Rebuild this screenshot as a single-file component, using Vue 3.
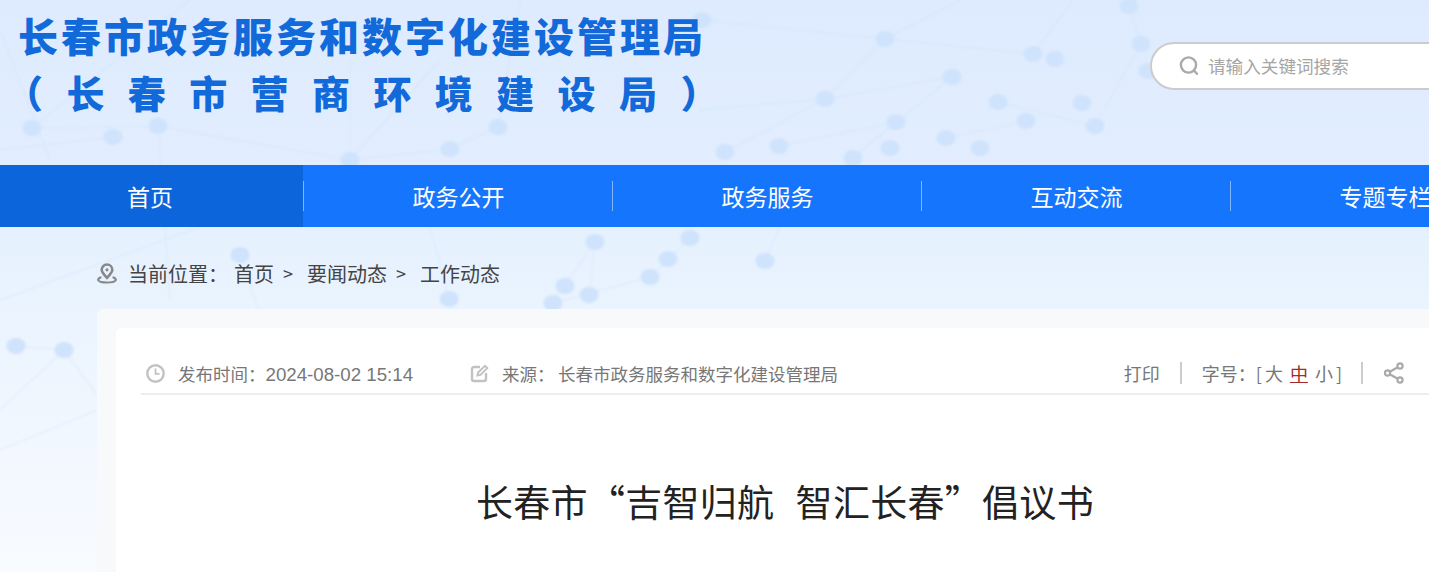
<script setup>
const nav = ['首页', '政务公开', '政务服务', '互动交流', '专题专栏']
const nodes = [
  [32,128],[113,137],[158,126],[350,160],[498,127],[450,149],[702,20],[885,39],[1033,54],[1055,59],
  [825,99],[952,77],[998,102],[896,122],[1026,121],[1095,126],[1082,103],[946,138],[890,148],[725,152],
  [779,146],[853,158],[980,148],[1129,6],[1141,44],[1148,71],[595,242],[690,238],[668,259],[650,277],
  [765,261],[565,286],[589,295],[553,303],[240,255],[449,299],[16,346],[64,350]
]
const lines = [
  [0,30,50,160],[190,0,32,128],[32,128,158,126],[158,126,350,160],[350,160,450,149],[450,149,498,127],
  [498,127,520,0],[158,126,170,300],[113,137,0,150],[702,20,885,39],[885,39,1033,54],[885,39,825,99],
  [825,99,725,152],[885,39,960,0],[1033,54,1073,0],[825,99,700,110],[952,77,825,99],[952,77,853,158],
  [896,122,779,146],[998,102,1095,126],[1095,126,1141,44],[1141,44,1129,6],[1026,121,946,138],[896,122,853,158],
  [350,160,440,60],[350,160,350,60],[64,350,16,346],[64,350,97,395],[64,350,0,410],[0,300,200,227],
  [595,242,589,295],[690,238,650,277],[650,277,553,303],[595,242,540,320],[765,261,780,227],[0,450,97,410],
  [240,255,270,345],[449,299,430,227]
]
</script>

<template>
  <div class="viewport">
    <div class="page">
      <svg class="backdrop" width="1570" height="572" viewBox="0 0 1570 572" aria-hidden="true">
        <g class="links" stroke="#c6dcf8" stroke-width="1.5" fill="none">
          <line v-for="(l, i) in lines" :key="i" :x1="l[0]" :y1="l[1]" :x2="l[2]" :y2="l[3]" />
        </g>
        <g class="dots" fill="#cfe3fc">
          <ellipse v-for="(n, i) in nodes" :key="i" :cx="n[0]" :cy="n[1]" rx="9.500" ry="8" />
        </g>
      </svg>

      <header class="header">
        <div class="brand">
          <div class="brand-one">长春市政务服务和数字化建设管理局</div>
          <div class="brand-two">（长春市营商环境建设局）</div>
        </div>
        <div class="search">
          <svg class="search-icon" width="20" height="20" viewBox="0 0 20 20" fill="none" stroke="#aaa" stroke-width="2.400">
            <circle cx="9.500" cy="9" r="7.600" />
            <path d="M15 14.600l3 3.200" stroke-linecap="round" />
          </svg>
          <span>请输入关键词搜索</span>
        </div>
      </header>

      <nav class="nav">
        <a v-for="(item, i) in nav" :key="item" class="nav-item" :class="{ active: i === 0 }">{{ item }}</a>
      </nav>

      <div class="crumbs">
        <svg class="pin" width="20" height="21" viewBox="0 0 20 21" fill="none" stroke="#888">
          <path d="M10 1.500a5.300 5.300 0 0 1 5.300 5.300c0 2.800-2.700 5.300-5.300 8-2.600-2.700-5.300-5.200-5.300-8A5.300 5.300 0 0 1 10 1.500z" stroke-width="2.600" />
          <circle cx="10" cy="6.800" r="1.600" fill="#888" stroke="none" />
          <path d="M3.500 14.500c-2 .9-2.600 2-2 3 .8 1.300 4.300 2 8.500 2s7.700-.7 8.500-2c.6-1 0-2.100-2-3" stroke-width="2.200" stroke-linecap="round" />
        </svg>
        <span class="here">当前位置：</span>
        <a class="crumb">首页</a><span class="gt">&gt;</span>
        <a class="crumb">要闻动态</a><span class="gt">&gt;</span>
        <a class="crumb">工作动态</a>
      </div>

      <main class="outer">
        <section class="inner">
          <div class="meta">
            <svg class="m-icon" width="19" height="19" viewBox="0 0 19 19" fill="none" stroke="#c2c2c2" stroke-width="2.400">
              <circle cx="9.500" cy="9.500" r="8.200" />
              <path d="M9.500 4.500v5.300h4" stroke-width="1.800" />
            </svg>
            <span class="publish">发布时间：<span class="date">2024-08-02 15:14</span></span>
            <svg class="m-icon edit" width="19" height="19" viewBox="0 0 19 19" fill="none" stroke="#c2c2c2" stroke-width="2.400">
              <path d="M10 3H4a2 2 0 0 0-2 2v10a2 2 0 0 0 2 2h10a2 2 0 0 0 2-2V9" />
              <path d="M7.500 11.500l.6-3L15 1.800l2.300 2.300-6.900 6.800z" stroke-width="2" />
            </svg>
            <span class="src-label">来源：</span>
            <span class="src">长春市政务服务和数字化建设管理局</span>
            <div class="tools">
              <a>打印</a>
              <i class="bar"></i>
              <span class="size">字号：<b>[</b><a>大</a><a class="cur">中</a><a>小</a><b class="close">]</b></span>
              <i class="bar"></i>
              <svg width="20" height="22" viewBox="0 0 20 22" fill="none" stroke="#aaa" stroke-width="2.200">
                <circle cx="16" cy="4" r="2.600" /><circle cx="16" cy="18" r="2.600" /><circle cx="3.500" cy="11" r="2.600" />
                <path d="M13.700 5.300L5.800 9.700M13.700 16.700L5.800 12.300" />
              </svg>
            </div>
          </div>
          <h1 class="title">长春市“吉智归航&nbsp;&nbsp;智汇长春”倡议书</h1>
        </section>
      </main>
    </div>
  </div>
</template>

<style>
html, body { margin: 0; overflow: hidden; }
</style>

<style scoped>
.viewport {
  width: 1429px;
  height: 572px;
  overflow: hidden;
  font-family: "Noto Sans CJK SC", "Liberation Sans", sans-serif;
}
.page {
  position: relative;
  width: 1570px;
  height: 572px;
  overflow: hidden;
  background: linear-gradient(180deg, #deebfe 0%, #e2eefe 30%, #e9f3fe 50%, #f1f7ff 75%, #f8fbff 100%);
}
.backdrop { position: absolute; left: 0; top: 0; }
.links { opacity: 0.3; filter: blur(1px); }
.dots { filter: blur(0.8px); }
.header {
  position: relative;
  height: 165px;
  display: flex;
  justify-content: space-between;
}
.brand {
  padding: 12px 0 0 18px;
  font-weight: 900;
  color: #1269d9;
  white-space: nowrap;
}
.brand-one { font-size: 40px; line-height: 46px; letter-spacing: 3px; }
.brand-two { font-size: 38px; line-height: 46px; letter-spacing: 23.400px; margin: 11px 0 0 -13px; }
.search {
  box-sizing: border-box;
  margin-top: 42px;
  width: 420px;
  height: 48px;
  padding: 0 0 2px 27px;
  border: 2px solid #ccc;
  border-radius: 24px;
  background: #fff;
  display: flex;
  align-items: center;
  font-size: 17.600px;
  color: #a5a5a5;
}
.search-icon { margin-right: 9px; margin-top: 2px; }
.nav {
  position: relative;
  display: flex;
  height: 62px;
  background: #1575fc;
}
.nav-item {
  position: relative;
  box-sizing: border-box;
  flex: 0 0 309px;
  padding-left: 2px;
  display: flex;
  align-items: center;
  justify-content: center;
  color: #fff;
  font-size: 23px;
}
.nav-item.active { flex-basis: 303px; padding: 0 3px 0 0; background: #0d65dc; }
.nav-item:not(:last-child)::after {
  content: "";
  position: absolute;
  right: -1px;
  top: 16px;
  height: 30px;
  width: 1px;
  background: rgba(200, 225, 255, 0.6);
}
.crumbs {
  position: relative;
  height: 82px;
  box-sizing: border-box;
  padding: 10px 0 0 97px;
  display: flex;
  align-items: center;
  font-size: 20px;
  color: #444;
  white-space: nowrap;
}
.pin { margin-right: 11px; }
.here { width: 106px; }
.crumb { color: #444; }
.gt { margin: 0 14px 0 9px; font-size: 18px; }
.outer {
  position: relative;
  margin: 0 97px;
  padding: 19px 19px 0;
  height: 263px;
  box-sizing: border-box;
  background: #f8f9fb;
  border-radius: 6px 6px 0 0;
}
.inner {
  height: 100%;
  background: #fff;
  border-radius: 6px 6px 0 0;
  padding: 25px 0 0 25px;
}
.meta {
  box-sizing: border-box;
  width: 1288px;
  height: 42px;
  padding: 0 25px 0 5px;
  border-bottom: 2px solid #eee;
  display: flex;
  align-items: center;
  font-size: 17.500px;
  color: #777;
  white-space: nowrap;
}
.m-icon { flex: none; }
.publish { margin-left: 13px; width: 292px; }
.date { font-family: "Liberation Sans", sans-serif; font-size: 18.700px; }
.src-label { margin-left: 13px; width: 58px; margin-right: -2px; }
.tools { margin-left: auto; display: flex; align-items: center; font-size: 18px; }
.bar { width: 2px; height: 22px; background: #ccc; margin: 0 20px; }
.bar:last-of-type { margin-right: 21px; }
.size b { font-weight: 400; margin: 0 3px 0 0; }
.size b.close { margin-right: -1px; }
.size a { margin-right: 7px; }
.size a:nth-of-type(3) { margin-right: 3px; }
.cur { color: #a52a2a; text-decoration: underline; }
.title {
  margin: 82px 0 0 -25px;
  font-size: 37px;
  line-height: 48px;
  letter-spacing: 0.300px;
  word-spacing: 2px;
  font-weight: 400;
  color: #222;
  text-align: center;
  white-space: nowrap;
}
</style>
